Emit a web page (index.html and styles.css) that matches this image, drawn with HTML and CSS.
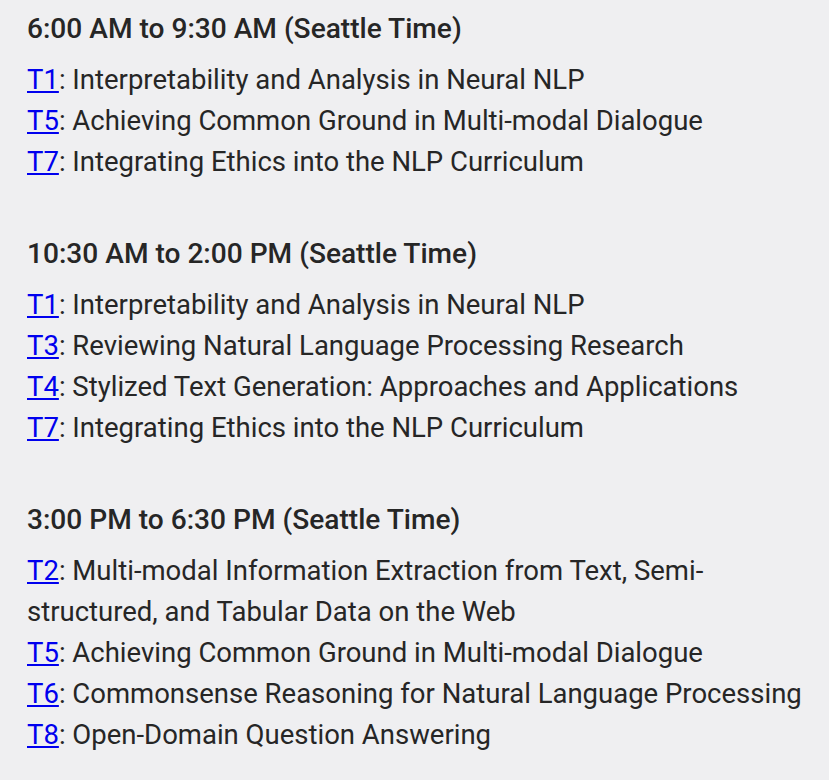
FILE: index.html
```html
<!DOCTYPE html>
<html>
<head>
<meta charset="utf-8">
<link rel="stylesheet" href="styles.css">
</head>
<body>
<main class="schedule">
  <section class="slot">
    <h2 class="slot-title">6:00 AM to 9:30 AM (Seattle Time)</h2>
    <p class="talks">
      <a href="#">T1</a>: Interpretability and Analysis in Neural NLP<br>
      <a href="#">T5</a>: Achieving Common Ground in Multi-modal Dialogue<br>
      <a href="#">T7</a>: Integrating Ethics into the NLP Curriculum
    </p>
  </section>
  <section class="slot">
    <h2 class="slot-title">10:30 AM to 2:00 PM (Seattle Time)</h2>
    <p class="talks">
      <a href="#">T1</a>: Interpretability and Analysis in Neural NLP<br>
      <a href="#">T3</a>: Reviewing Natural Language Processing Research<br>
      <a href="#">T4</a>: Stylized Text Generation: Approaches and Applications<br>
      <a href="#">T7</a>: Integrating Ethics into the NLP Curriculum
    </p>
  </section>
  <section class="slot">
    <h2 class="slot-title">3:00 PM to 6:30 PM (Seattle Time)</h2>
    <p class="talks">
      <a href="#">T2</a>: Multi-modal Information Extraction from Text, Semi-structured, and Tabular Data on the Web<br>
      <a href="#">T5</a>: Achieving Common Ground in Multi-modal Dialogue<br>
      <a href="#">T6</a>: Commonsense Reasoning for Natural Language Processing<br>
      <a href="#">T8</a>: Open-Domain Question Answering
    </p>
  </section>
</main>
</body>
</html>
```
FILE: styles.css
```css
html, body {
  margin: 0;
  background: #efeff1;
}
body {
  font-family: Roboto, "Liberation Sans", sans-serif;
  color: #262626;
}
.schedule {
  padding: 8px 18px 0 27px;
  display: flex;
  flex-direction: column;
  gap: 51px;
}
.slot-title {
  margin: 0 0 10px;
  font-size: 28.1px;
  font-weight: 500;
  line-height: 41px;
}
.talks {
  margin: 0;
  font-size: 27.5px;
  line-height: 41px;
}
.talks a {
  color: #0000ee;
}
```
